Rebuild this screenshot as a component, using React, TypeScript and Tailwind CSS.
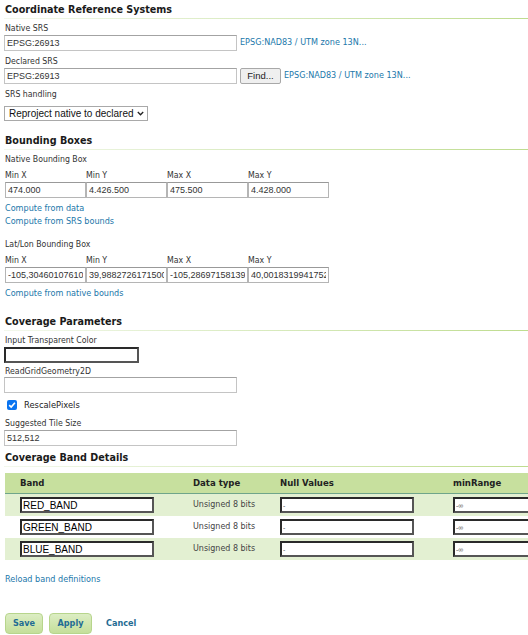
const label = "block text-[8.7px] leading-[12px] text-[#333]";
const link = "block text-[9px] leading-[13px] text-[#2277aa]";
const field =
  "h-[16px] border border-[#c4c4c4] border-t-[#a3a3a3] bg-white px-[2px] text-[9px] text-[#333] outline-none";
const darkField =
  "h-[16px] border-2 border-[#555] border-t-[#2a2a2a] border-l-[#2a2a2a] bg-white px-[1px] outline-none";
const sans = { fontFamily: "'Liberation Sans', Arial, sans-serif" };

function Heading({ children, top }: { children: string; top: string }) {
  return (
    <div className={top}>
      <div className="h-[18px] pl-px text-[10.7px] font-bold leading-[20px] text-[#1a1a1a]">{children}</div>
      <div className="h-px bg-gradient-to-r from-[#f3f8ec] to-[#bedc8e]" />
    </div>
  );
}

function BBox({ values }: { values: string[] }) {
  const names = ["Min X", "Min Y", "Max X", "Max Y"];
  return (
    <div className="mt-[4px] ml-px grid w-[324px] grid-cols-4">
      {names.map((n, i) => (
        <div key={n} className="flex flex-col">
          <span className={label}>{n}</span>
          <input
            readOnly
            value={values[i]}
            className="mt-px h-[16px] w-[81px] border border-[#b5b5b5] border-t-[#999] bg-white px-[2px] text-[9px] text-[#333] outline-none"
            style={sans}
          />
        </div>
      ))}
    </div>
  );
}

const bands = ["RED_BAND", "GREEN_BAND", "BLUE_BAND"];

export default function App() {
  return (
    <div
      className="h-[635px] w-[528px] overflow-hidden bg-white pl-[4px]"
      style={{ fontFamily: "'DejaVu Sans Condensed', 'DejaVu Sans', sans-serif" }}
    >
      {/* Coordinate Reference Systems */}
      <Heading top="">Coordinate Reference Systems</Heading>
      <span className={`${label} mt-[3px] pl-px`}>Native SRS</span>
      <div className="mt-px flex items-center">
        <input readOnly value="EPSG:26913" className={`${field} w-[233px]`} style={sans} />
        <a className="ml-[3px] text-[9px] text-[#2277aa]">EPSG:NAD83 / UTM zone 13N...</a>
      </div>
      <span className={`${label} mt-[4px] pl-px`}>Declared SRS</span>
      <div className="mt-px flex items-center">
        <input readOnly value="EPSG:26913" className={`${field} w-[233px]`} style={sans} />
        <button
          className="ml-[3px] h-[16px] w-[41px] rounded-[2px] border border-[#a8a8a8] bg-[#efefef] text-[9.5px] leading-[14px] text-[#222]"
          style={sans}
        >
          Find...
        </button>
        <a className="ml-[3px] text-[9px] text-[#2277aa]">EPSG:NAD83 / UTM zone 13N...</a>
      </div>
      <span className={`${label} mt-[4px] pl-px`}>SRS handling</span>
      <div
        className="mt-[6px] flex h-[15px] w-[144px] items-center border border-[#a9a9a9] bg-white pl-[4px] text-[10px] text-[#111]"
        style={sans}
      >
        <span>Reproject native to declared</span>
        <svg className="ml-[3px]" width="7" height="5" viewBox="0 0 7 5">
          <path d="M0.8 1 L3.5 3.8 L6.2 1" fill="none" stroke="#222" strokeWidth="1.3" />
        </svg>
      </div>

      {/* Bounding Boxes */}
      <Heading top="mt-[10px]">Bounding Boxes</Heading>
      <span className={`${label} mt-[3px] pl-px`}>Native Bounding Box</span>
      <BBox values={["474.000", "4.426.500", "475.500", "4.428.000"]} />
      <a className={`${link} mt-[4px] pl-px`}>Compute from data</a>
      <a className={`${link} pl-px`}>Compute from SRS bounds</a>
      <span className={`${label} mt-[10px] pl-px`}>Lat/Lon Bounding Box</span>
      <BBox values={["-105,30460107610", "39,98827261715002", "-105,28697158139", "40,00183199417524"]} />
      <a className={`${link} mt-[4px] pl-px`}>Compute from native bounds</a>

      {/* Coverage Parameters */}
      <Heading top="mt-[12px]">Coverage Parameters</Heading>
      <span className={`${label} mt-[3px] pl-px`}>Input Transparent Color</span>
      <input readOnly value="" className={`${darkField} mt-px block h-[15px] w-[135px]`} />
      <span className={`${label} mt-[2px] pl-px`}>ReadGridGeometry2D</span>
      <input readOnly value="" className={`${field} block w-[233px]`} style={sans} />
      <div className="mt-[5px] flex h-[14px] items-center pl-[3px]">
        <span className="flex h-[10px] w-[10px] items-center justify-center rounded-[2px] bg-[#0a74f0]">
          <svg width="8" height="8" viewBox="0 0 8 8">
            <path d="M1.2 4.2 L3.2 6.1 L6.9 1.8" fill="none" stroke="#fff" strokeWidth="1.6" />
          </svg>
        </span>
        <span className="ml-[7px] text-[9.3px] text-[#222]">RescalePixels</span>
      </div>
      <span className={`${label} mt-[5px] pl-px`}>Suggested Tile Size</span>
      <input readOnly value="512,512" className={`${field} mt-px block w-[233px] text-[9.6px]`} style={sans} />

      {/* Coverage Band Details */}
      <Heading top="mt-[2px]">Coverage Band Details</Heading>
      <div className="mt-[6px] ml-px">
        <div className="grid h-[21px] grid-cols-[188px_87px_173px_1fr] items-center border-b border-[#6fa58a] bg-[#c7e09e] text-[9.5px] font-bold text-[#222]">
          <span className="pl-[15px]">Band</span>
          <span>Data type</span>
          <span>Null Values</span>
          <span>minRange</span>
        </div>
        {bands.map((b, i) => (
          <div
            key={b}
            className={`grid h-[22px] grid-cols-[188px_87px_173px_1fr] items-center ${i % 2 === 0 ? "bg-[#e3f0d2]" : "bg-white"}`}
          >
            <div className="pl-[15px]">
              <input
                readOnly
                value={b}
                className={`${darkField} block w-[134px] text-[10px] text-black`}
                style={sans}
              />
            </div>
            <span className="text-[8.9px] text-[#444]">Unsigned 8 bits</span>
            <input readOnly value="-" className={`${darkField} w-[134px] text-[7px] text-[#555]`} style={sans} />
            <input readOnly value="-∞" className={`${darkField} w-[100px] text-[7px] text-[#555]`} style={sans} />
          </div>
        ))}
      </div>
      <a className={`${link} mt-[13px] pl-px leading-[12px]`}>Reload band definitions</a>

      {/* Actions */}
      <div className="mt-[27px] flex items-center pl-px">
        <button className="h-[21px] w-[38px] rounded-[4px] border border-[#b7d58c] bg-gradient-to-b from-[#dcedc3] to-[#c4df9a] text-[9px] font-bold text-[#1f6c93]">
          Save
        </button>
        <button className="ml-[6px] h-[21px] w-[43px] rounded-[4px] border border-[#b7d58c] bg-gradient-to-b from-[#dcedc3] to-[#c4df9a] text-[9px] font-bold text-[#1f6c93]">
          Apply
        </button>
        <a className="ml-[14px] text-[9px] font-bold text-[#1f6c93]">Cancel</a>
      </div>
    </div>
  );
}
